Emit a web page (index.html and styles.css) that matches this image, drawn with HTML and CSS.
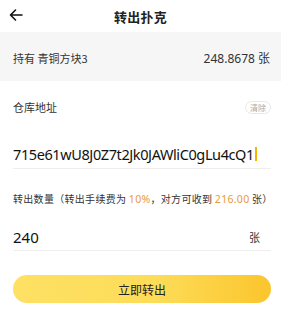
FILE: index.html
```html
<!DOCTYPE html>
<html lang="zh">
<head>
<meta charset="utf-8">
<title>转出扑克</title>
<link rel="stylesheet" href="styles.css">
</head>
<body>
<div class="page">
  <header class="topbar">
    <svg class="back" width="14" height="12" viewBox="0 0 14 12"><path d="M13 6H1.5M6.5 1L1.5 6l5 5" fill="none" stroke="#111" stroke-width="1.6" stroke-linecap="round" stroke-linejoin="round"/></svg>
    <h1 class="title">转出扑克</h1>
  </header>
  <div class="holding">
    <span>持有 青铜方块3</span>
    <span>248.8678 张</span>
  </div>
  <div class="form">
    <div class="label-row">
      <span class="label">仓库地址</span>
      <span class="clear">清除</span>
    </div>
    <div class="input-row">
      <span class="addr">715e61wU8J0Z7t2Jk0JAWliC0gLu4cQ1</span><span class="caret"></span>
    </div>
    <div class="label-row qty-label">
      <span class="label small">转出数量（转出手续费为 <em>10%</em>，对方可收到 <em>216.00</em> 张）</span>
    </div>
    <div class="input-row amount-row">
      <span class="amount">240</span>
      <span class="unit">张</span>
    </div>
    <button class="submit">立即转出</button>
  </div>
</div>
</body>
</html>
```
FILE: styles.css
```css
* { box-sizing: border-box; margin: 0; padding: 0; }
html, body { background: #fff; }
body {
  font-family: "Noto Sans CJK SC", "Noto Sans", sans-serif;
  color: #333;
}
.page { width: 281px; }
.topbar {
  height: 32px;
  position: relative;
  display: flex;
  align-items: center;
  justify-content: center;
}
.back { position: absolute; left: 9px; top: 9px; }
.title { font-size: 13px; font-weight: 700; color: #222; letter-spacing: 0.3px; }
.holding {
  height: 49px;
  background: #f6f6f6;
  display: flex;
  align-items: center;
  justify-content: space-between;
  padding: 3px 11px 0 13px;
  font-size: 11px;
  color: #333;
}
.holding span:last-child { font-size: 12px; font-family: "Noto Sans", "Noto Sans CJK SC", sans-serif; }
.form { padding: 0 10px 0 13px; }
.label-row {
  margin-top: 16px;
  height: 20px;
  display: flex;
  align-items: center;
  justify-content: space-between;
  white-space: nowrap;
}
.label { font-size: 11px; color: #333; }
.label.small { font-size: 10px; letter-spacing: 0.3px; }
.label em { font-style: normal; color: #e89a3c; font-family: "Noto Sans", sans-serif; font-size: 10.5px; }
.clear {
  font-size: 8px;
  color: #aaa;
  border: 1px solid #e8e8e8;
  border-radius: 7px;
  height: 13px;
  line-height: 11px;
  padding: 0 4px;
}
.input-row {
  margin-top: 23px;
  height: 29px;
  border-bottom: 1px solid #eeeeee;
  display: flex;
  align-items: center;
}
.addr {
  font-family: "Noto Sans", sans-serif;
  font-size: 14.5px;
  color: #111;
  letter-spacing: -0.4px;
}
.caret {
  width: 2px;
  height: 14px;
  background: #f4b400;
  margin-left: 1px;
}
.qty-label { margin-top: 19px; }
.amount-row { margin-top: 15px; justify-content: space-between; height: 28px; }
.amount { font-family: "Noto Sans", sans-serif; font-size: 15px; color: #111; }
.unit { font-size: 11px; color: #333; margin-right: 11px; }
.submit {
  display: flex;
  align-items: center;
  justify-content: center;
  width: 258px;
  height: 28px;
  margin-top: 24px;
  border: none;
  border-radius: 14px;
  background: linear-gradient(90deg, #fde164 0%, #fddc58 55%, #fbc52d 100%);
  font-family: "Noto Sans CJK SC", sans-serif;
  font-size: 12px;
  color: #222;
}
```
